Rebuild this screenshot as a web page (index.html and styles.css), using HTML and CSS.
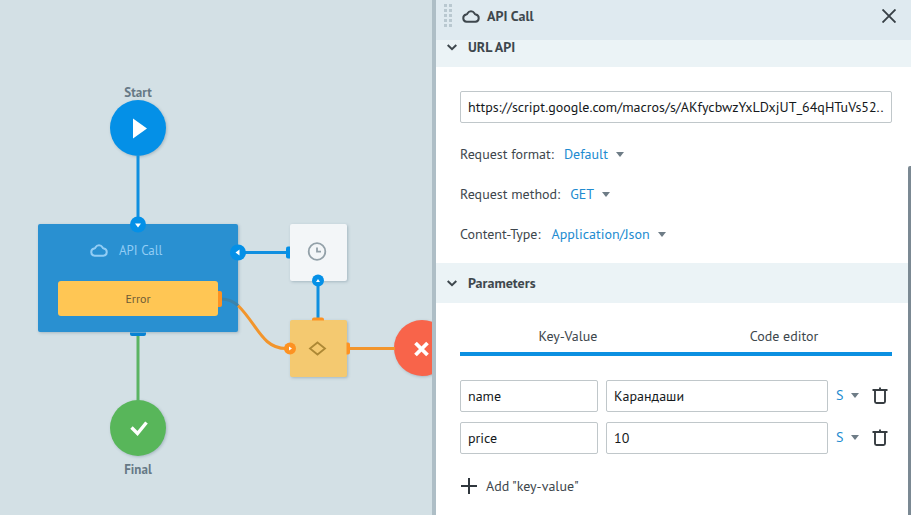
FILE: index.html
```html
<!DOCTYPE html>
<html lang="en">
<head>
<meta charset="utf-8">
<title>API Call</title>
<link rel="stylesheet" href="styles.css">
</head>
<body>
<svg class="sprite" aria-hidden="true">
  <symbol id="cloud" viewBox="0 0 18 14"><path d="M4.600 12.800h8.800a3.700 3.700 0 0 0 .4-7.300c-.9-.2-1-.5-1.400-1.300a3.900 3.900 0 0 0-6.800 0c-.4.8-.5 1.100-1.400 1.300a3.700 3.700 0 0 0 .4 7.300z" fill="none" stroke="currentColor" stroke-width="2" stroke-linejoin="round"/></symbol>
  <symbol id="chevron" viewBox="0 0 10 7"><path d="M.7 1L5 5.200 9.300 1" fill="none" stroke="currentColor" stroke-width="2"/></symbol>
  <symbol id="caret" viewBox="0 0 8 5"><path d="M0 0h8L4 5z" fill="currentColor"/></symbol>
  <symbol id="trash" viewBox="0 0 16 17"><path d="M0.500 3h15M8 .5V3M3 3v11.500q0 1.500 1.500 1.500h7q1.500 0 1.500-1.500V3" fill="none" stroke="currentColor" stroke-width="1.900"/></symbol>
</svg>
<div class="app">
  <main class="canvas">
    <div class="node-label start-label">Start</div>
    <div class="node circle start"></div>
    <div class="node api">
      <div class="api-title"><svg class="cloud"><use href="#cloud"/></svg><span>API Call</span></div>
      <div class="error">Error</div>
    </div>
    <div class="node tile delay"></div>
    <div class="node tile condition"></div>
    <div class="node circle fail"></div>
    <div class="node circle final"></div>
    <div class="node-label final-label">Final</div>
    <svg class="edges" width="432" height="515" viewBox="0 0 432 515">
      <g fill="none" stroke-width="3">
        <path d="M138 156v62M245 252.500h42M318 286v32" stroke="#0f8fe0"/>
        <path d="M138 336v65" stroke="#5ab463"/>
        <path d="M238 305.500C257 324 262 348.500 286 348.500M350 348.500h45" stroke="#f2952c"/>
        <path d="M221.500 299q9 0 16.500 6.500" stroke="#3c83ab"/>
      </g>
      <path d="M130 332.500h16v1.500q0 2-2 2h-12q-2 0-2-2z" fill="#0782d3"/>
      <path d="M290 246.500h-2q-2 0-2 2v8q0 2 2 2h2z" fill="#0490e7"/>
      <path d="M312 320.500v-1q0-2 2-2h8q2 0 2 2v1zM346.500 342.500h1.500q2 0 2 2v8q0 2-2 2h-1.500z" fill="#fd9222"/>
      <path d="M218 291h2q2 0 2 2v12q0 2-2 2h-2z" fill="#fd9222"/>
      <g fill="#0490e7"><circle cx="138" cy="224.500" r="8"/><circle cx="238" cy="252.500" r="8"/><circle cx="318" cy="280.500" r="6"/></g>
      <circle cx="290" cy="348.500" r="6" fill="#fd9222"/>
      <path d="M135 223.500h6l-3 4zM239.500 249.500v6l-4-3zM316 282h4l-2-3zM289 346.500v4l3-2zM133 118.500v20l14-10z" fill="#fff"/>
      <path d="M131.500 427.500l6 6 9-11" fill="none" stroke="#fff" stroke-width="3.400"/>
      <path d="M415.500 343l12 12m0-12l-12 12" fill="none" stroke="#fff" stroke-width="3.800"/>
      <circle cx="317" cy="251.500" r="8.300" fill="none" stroke="#93a1a9" stroke-width="1.800"/>
      <path d="M317 247.500v4.200h4" fill="none" stroke="#93a1a9" stroke-width="1.800"/>
      <path d="M317.500 342.500l7.500 6-7.500 6-7.500-6z" fill="none" stroke="#ad8835" stroke-width="1.800"/>
    </svg>
  </main>

  <aside class="panel">
    <header class="panel-head">
      <span class="grip"></span>
      <svg class="cloud"><use href="#cloud"/></svg>
      <h1>API Call</h1>
      <svg class="close" viewBox="0 0 14 14"><path d="M.5.5l13 13M13.500.5l-13 13" stroke="#373f45" stroke-width="1.900"/></svg>
    </header>
    <div class="panel-body">
      <h2 class="section first"><svg class="chevron"><use href="#chevron"/></svg>URL API</h2>
      <div class="request">
        <div class="field">https://script.google.com/macros/s/AKfycbwzYxLDxjUT_64qHTuVs52..</div>
        <div class="option">Request format:<span class="select">Default<svg class="caret"><use href="#caret"/></svg></span></div>
        <div class="option">Request method:<span class="select">GET<svg class="caret"><use href="#caret"/></svg></span></div>
        <div class="option">Content-Type:<span class="select wide">Application/Json<svg class="caret"><use href="#caret"/></svg></span></div>
      </div>
      <h2 class="section"><svg class="chevron"><use href="#chevron"/></svg>Parameters</h2>
      <div class="params">
        <div class="tabs"><span>Key-Value</span><span>Code editor</span></div>
        <div class="pair">
          <div class="field">name</div><div class="field">Карандаши</div>
          <span class="type">S<svg class="caret"><use href="#caret"/></svg></span>
          <svg class="trash"><use href="#trash"/></svg>
        </div>
        <div class="pair">
          <div class="field">price</div><div class="field">10</div>
          <span class="type">S<svg class="caret"><use href="#caret"/></svg></span>
          <svg class="trash"><use href="#trash"/></svg>
        </div>
        <div class="add"><svg class="plus" viewBox="0 0 16 16"><path d="M8 0v16M0 8h16" stroke="#30373d" stroke-width="2"/></svg>Add "key-value"</div>
      </div>
    </div>
    <div class="scrollbar"></div>
  </aside>
</div>
</body>
</html>
```
FILE: styles.css
```css
* { box-sizing: border-box; }
body { margin: 0; font: 14px/20px "PT Sans", "Noto Sans", sans-serif; color: #3e474d; }
.sprite { display: none; }
svg { flex: none; }
.app { display: flex; width: 911px; height: 515px; overflow: hidden; }

.canvas { position: relative; width: 432px; flex: none; background: #d3e0e5; overflow: hidden; }
.edges { position: absolute; left: 0; top: 0; }
.node { position: absolute; box-shadow: 1px 1px 3px rgba(60, 90, 110, .3); }
.node-label { position: absolute; left: 98px; width: 80px; text-align: center; font-size: 13px; font-weight: 700; color: #667985; }
.start-label { top: 83px; }
.final-label { top: 460px; }
.circle { width: 56px; height: 56px; border-radius: 50%; }
.start { left: 110px; top: 100.400px; background: #0490e7; }
.final { left: 110px; top: 400.400px; background: #58b65a; }
.fail { left: 394px; top: 320.400px; background: #f8644a; }
.tile { width: 56.500px; height: 56.500px; left: 290px; border-radius: 2px; }
.delay { top: 224.300px; background: #f3f6f8; }
.condition { top: 320.300px; background: #f4c970; }
.api { left: 38px; top: 224.300px; width: 200px; height: 108.200px; padding: 17px 20px 16px; border-radius: 2px; background: #2990d1; }
.api-title { display: flex; align-items: center; gap: 11px; height: 20px; padding-left: 32px; color: #92cdf5; font-size: 13px; }
.api-title .cloud { margin-top: -3px; }
.error { height: 35px; margin-top: 20px; border-radius: 3px; background: #ffc654; color: #6d5b36; font-size: 12px; line-height: 36px; text-align: center; }
.cloud { width: 18px; height: 14px; }

.panel { position: relative; flex: 1; border-left: 4px solid #aebec6; background: #fff; }
.panel-head { display: flex; align-items: center; height: 40px; padding: 0 15px 8px 8px; background: #dfeaf0; }
.grip { width: 8px; height: 23px; margin: -1px 10px 0 0; background: repeating-linear-gradient(transparent 0 3px, #dfeaf0 3px 5px), repeating-linear-gradient(90deg, #b9c8d0 0 3px, transparent 3px 5px); }
.panel-head h1 { margin: 0 auto 0 7px; font-size: 14px; line-height: 20px; }
.close { width: 14px; height: 14px; }
.section { display: flex; align-items: center; gap: 11px; height: 40px; margin: 0; padding-left: 11px; background: #ebf3f6; font-size: 14px; line-height: 20px; }
.section.first { height: 27px; padding-bottom: 13px; line-height: 14px; }
.chevron { width: 10px; height: 7px; }
.request { height: 196px; padding: 24px 19px 0 24px; }
.field { height: 32px; padding: 5px 7px; border: 1px solid #c0c7ca; border-radius: 2px; background: #fff; color: #15191c; white-space: nowrap; overflow: hidden; }
.request .field { margin-bottom: 11px; }
.option { display: flex; align-items: center; gap: 10px; height: 40px; }
.select, .type { display: flex; align-items: center; gap: 8px; color: #218bd0; }
.select.wide { margin-left: 1px; }
.caret { width: 8px; height: 5px; color: #6e7c86; }
.params { padding: 14px 19px 0 24px; }
.tabs { display: grid; grid-template-columns: 1fr 1fr; height: 39px; margin-bottom: 24px; padding-top: 9px; border-bottom: 4px solid #0c90e1; text-align: center; }
.pair { display: grid; grid-template-columns: 138px 222px 23px 16px; column-gap: 8px; align-items: center; height: 32px; margin-bottom: 10px; }
.type { margin-top: -2px; }
.trash { width: 16px; height: 17px; margin: -2px 0 0 5px; color: #363c41; }
.add { display: flex; align-items: center; gap: 9px; margin: 22px 0 0 1px; }
.plus { width: 16px; height: 16px; }
.scrollbar { position: absolute; right: 0; top: 166px; width: 3px; height: 349px; border-radius: 2px 0 0 0; background: #7b8993; }
```
